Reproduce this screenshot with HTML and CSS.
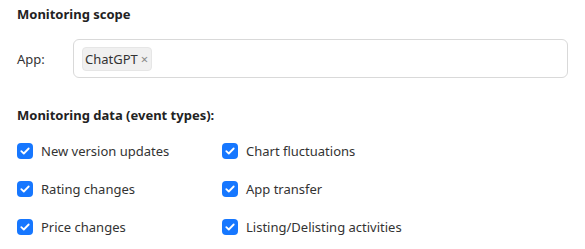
FILE: index.html
```html
<!DOCTYPE html>
<html lang="en">
<head>
    <meta charset="UTF-8">
    <title>Monitoring</title>
    <link rel="stylesheet" href="styles.css">
</head>
<body>
    <div class="container">
        <h3 class="section-title">Monitoring scope</h3>
        <div class="form-row">
            <label class="row-label">App:</label>
            <div class="select-box">
                <span class="tag">ChatGPT <span class="tag-close">&times;</span></span>
            </div>
        </div>

        <h3 class="section-title data-title">Monitoring data (event types):</h3>
        <div class="check-grid">
            <label class="check"><span class="box"><svg width="10" height="8" viewBox="0 0 10 8"><path d="M1.3 4.1 L3.8 6.5 L8.7 1.5" fill="none" stroke="white" stroke-width="1.8" stroke-linecap="round" stroke-linejoin="round"/></svg></span>New version updates</label>
            <label class="check"><span class="box"><svg width="10" height="8" viewBox="0 0 10 8"><path d="M1.3 4.1 L3.8 6.5 L8.7 1.5" fill="none" stroke="white" stroke-width="1.8" stroke-linecap="round" stroke-linejoin="round"/></svg></span>Chart fluctuations</label>
            <label class="check"><span class="box"><svg width="10" height="8" viewBox="0 0 10 8"><path d="M1.3 4.1 L3.8 6.5 L8.7 1.5" fill="none" stroke="white" stroke-width="1.8" stroke-linecap="round" stroke-linejoin="round"/></svg></span>Rating changes</label>
            <label class="check"><span class="box"><svg width="10" height="8" viewBox="0 0 10 8"><path d="M1.3 4.1 L3.8 6.5 L8.7 1.5" fill="none" stroke="white" stroke-width="1.8" stroke-linecap="round" stroke-linejoin="round"/></svg></span>App transfer</label>
            <label class="check"><span class="box"><svg width="10" height="8" viewBox="0 0 10 8"><path d="M1.3 4.1 L3.8 6.5 L8.7 1.5" fill="none" stroke="white" stroke-width="1.8" stroke-linecap="round" stroke-linejoin="round"/></svg></span>Price changes</label>
            <label class="check"><span class="box"><svg width="10" height="8" viewBox="0 0 10 8"><path d="M1.3 4.1 L3.8 6.5 L8.7 1.5" fill="none" stroke="white" stroke-width="1.8" stroke-linecap="round" stroke-linejoin="round"/></svg></span>Listing/Delisting activities</label>
        </div>
    </div>
</body>
</html>
```

FILE: styles.css
```css
body {
    margin: 0;
    font-family: "Noto Sans", sans-serif;
    font-size: 13px;
    color: #333;
    background: #fff;
}

.container {
    padding: 5px 17px 0 17px;
}

.section-title {
    margin: 0;
    font-size: 13px;
    font-weight: bold;
    color: #222;
    line-height: 18px;
}

.form-row {
    display: flex;
    align-items: center;
    margin-top: 16px;
}

.row-label {
    width: 56px;
}

.select-box {
    flex: 1;
    height: 37px;
    border: 1px solid #d9d9d9;
    border-radius: 6px;
    display: flex;
    align-items: center;
    padding: 0 8px;
}

.tag {
    display: inline-flex;
    align-items: center;
    height: 22px;
    padding: 0 3px 0 2px;
    background: #f0f0f0;
    border: 1px solid #e6e6e6;
    border-radius: 4px;
    color: #333;
}

.tag-close {
    color: #888;
    margin-left: 3px;
    font-size: 13px;
}

.data-title {
    margin-top: 28px;
}

.check-grid {
    display: grid;
    grid-template-columns: 205px 1fr;
    row-gap: 18px;
    margin-top: 17px;
}

.check {
    display: flex;
    align-items: center;
    gap: 8px;
    height: 20px;
}

.box {
    width: 16px;
    height: 16px;
    border-radius: 4px;
    background: #1677ff;
    display: flex;
    align-items: center;
    justify-content: center;
}
```
